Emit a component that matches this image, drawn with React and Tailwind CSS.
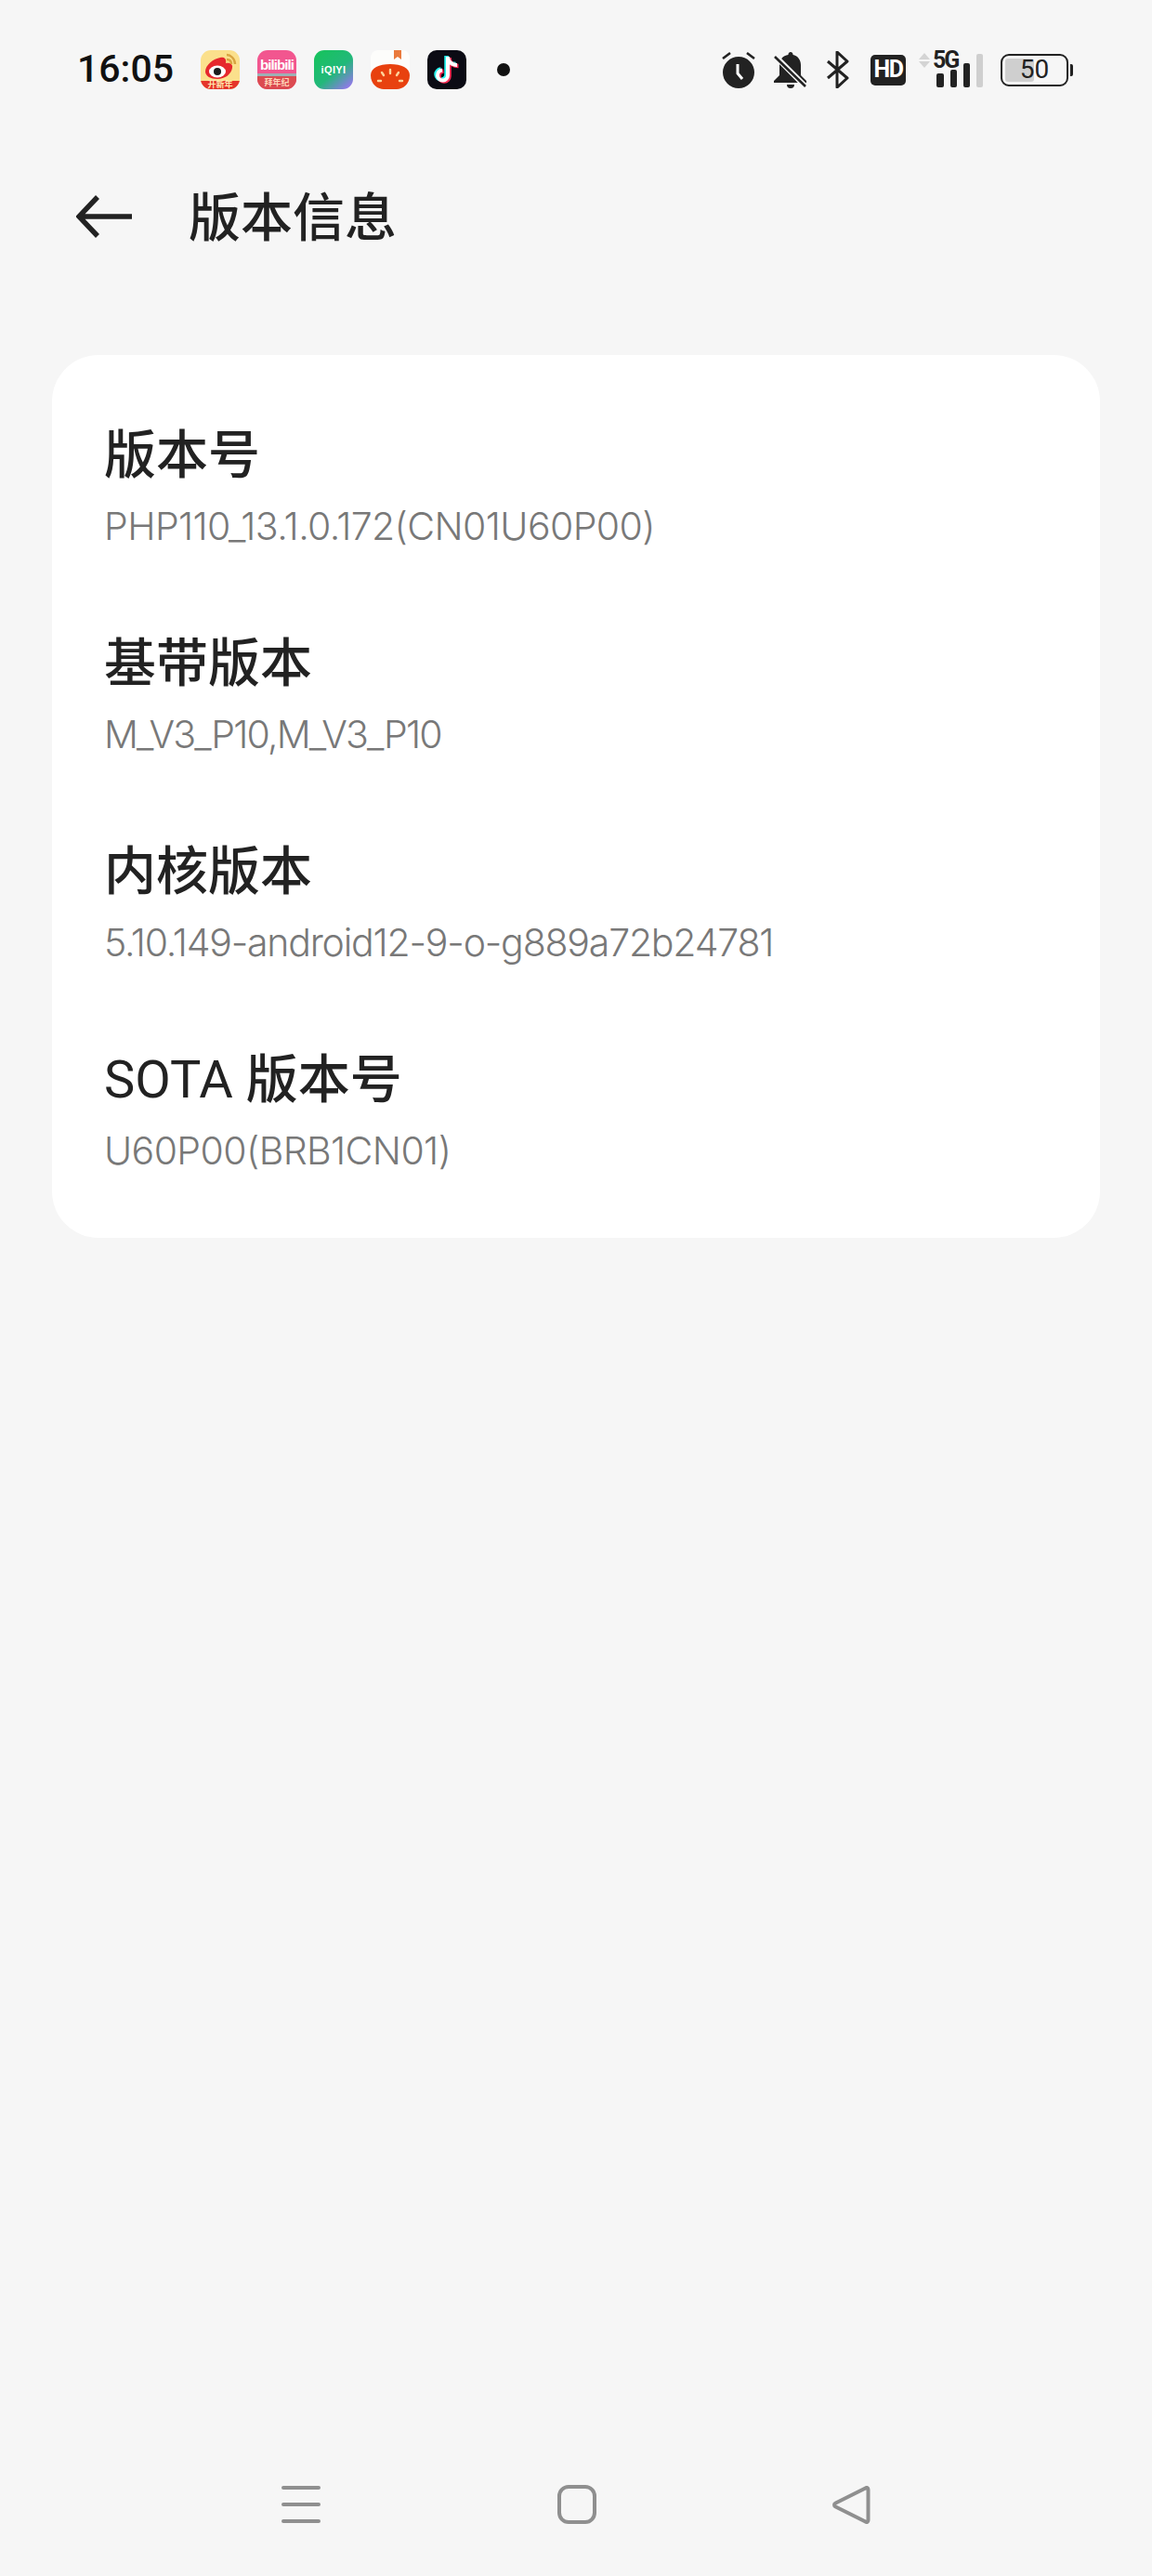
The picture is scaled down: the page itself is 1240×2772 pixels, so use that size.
import React from 'react';

const cjk = "font-['Roboto','Noto_Sans_CJK_SC',sans-serif]";

const items = [
  { title: '版本号', value: 'PHP110_13.1.0.172(CN01U60P00)', track: 'tracking-[-0.6px]' },
  { title: '基带版本', value: 'M_V3_P10,M_V3_P10', track: 'tracking-[-1.8px]' },
  { title: '内核版本', value: '5.10.149-android12-9-o-g889a72b24781', track: 'tracking-[-1.2px]' },
  { latin: 'SOTA', title: ' 版本号', value: 'U60P00(BRB1CN01)', track: 'tracking-[-0.6px]' },
];

const Weibo = () => (
  <div className="relative w-[42px] h-[42px] rounded-[11px] overflow-hidden bg-[#fbe08c]">
    <svg viewBox="0 0 42 42" className="w-full h-full">
      <path d="M5 23c0-7 9-14 16-15 5-1 7 2 6 6 4-1 8 1 7 5-1 7-8 12-16 12-7 0-13-3-13-8z" fill="#e6282d" />
      <ellipse cx="18" cy="23" rx="9" ry="6.500" fill="#fff" />
      <circle cx="18" cy="23" r="4" fill="#1c1c1c" />
      <path d="M28 5c4 0 9 4 9 10M28 10c3 0 5 2 5 5" stroke="#d9a441" strokeWidth="2.400" fill="none" />
      <path d="M0 33h42v9H0z" fill="#e5352b" />
    </svg>
    <span className="absolute bottom-0 inset-x-0 text-center text-[9px] leading-[10px] font-bold text-[#ffe9b0] font-['Noto_Sans_CJK_SC',sans-serif]">开新年</span>
  </div>
);

const Bili = () => (
  <div className="relative w-[42px] h-[42px] rounded-[11px] overflow-hidden bg-[#f2568f]">
    <div className="absolute left-0 right-0 top-[7px] text-center text-white font-bold text-[15px] leading-[18px] tracking-[-0.9px] font-['Liberation_Sans',sans-serif]">bilibili</div>
    <div className="absolute left-0 right-0 bottom-0 h-[17px] bg-[#dc4b51] border-t-[3px] border-[#9db0b5]" />
    <span className="absolute bottom-0 inset-x-0 text-center text-[9px] leading-[14px] font-bold text-[#ffd9bb] font-['Noto_Sans_CJK_SC',sans-serif]">拜年纪</span>
  </div>
);

const Iqiyi = () => (
  <div className="w-[42px] h-[42px] rounded-[11px] flex items-center justify-center bg-[linear-gradient(140deg,#16c45a_0%,#22b87a_55%,#a86bff_100%)]">
    <span className="text-white font-bold text-[11px] tracking-[0.4px] font-['Liberation_Sans',sans-serif]">iQIYI</span>
  </div>
);

const Tomato = () => (
  <svg viewBox="0 0 42 42" className="w-[42px] h-[42px]">
    <path d="M8 0h26a8 8 0 0 1 8 8v16H0V8a8 8 0 0 1 8-8z" fill="#fdfdfb" />
    <path d="M25 0h8v10l-4-3-4 3z" fill="#ea7a3c" />
    <path d="M0 27c0-8 9-12 21-12s21 4 21 12c0 10-8 15-14 15H14C8 42 0 37 0 27z" fill="#e8410f" />
    <g stroke="#ffd39a" strokeWidth="2.400" strokeLinecap="round">
      <path d="M21 21v4M12 24l2 3M30 24l-2 3M8 33h3M31 33h3" />
    </g>
  </svg>
);

const TIKTOK_NOTE = 'M22 7v20a5.500 5.500 0 1 1-6-5.500M22 7c0 5 4 9 10 9';

const Tiktok = () => (
  <svg viewBox="0 0 42 42" className="w-[42px] h-[42px]">
    <rect width="42" height="42" rx="10" fill="#0b0b14" />
    <path d={TIKTOK_NOTE} fill="none" stroke="#25f4ee" strokeWidth="4.500" transform="translate(-1.500 -1)" />
    <path d={TIKTOK_NOTE} fill="none" stroke="#fe2c55" strokeWidth="4.500" transform="translate(1.500 1)" />
    <path d={TIKTOK_NOTE} fill="none" stroke="#fff" strokeWidth="4" />
  </svg>
);

const Alarm = () => (
  <svg viewBox="0 0 36 40" className="w-[36px] h-[40px]">
    <circle cx="18" cy="23" r="17" fill="#222" />
    <path d="M1 8l8-6M35 8l-8-6" stroke="#222" strokeWidth="2.600" />
    <path d="M17 14v10l5 6" stroke="#fff" strokeWidth="3" fill="none" />
  </svg>
);

const BellOff = () => (
  <svg viewBox="0 0 38 40" className="w-[38px] h-[40px]">
    <path d="M19 1a2.500 2.500 0 0 1 2.500 3c5 1 8.500 5 8.500 11v11l6 6v2H1v-2l6-6V15c0-6 3.500-10 9.500-11A2.500 2.500 0 0 1 19 1z" fill="#222" />
    <path d="M15 36h8a4 4 0 0 1-8 0z" fill="#222" />
    <path d="M3 6l32 32" stroke="#f6f6f6" strokeWidth="6" />
    <path d="M2 6l33 32" stroke="#222" strokeWidth="2.600" />
  </svg>
);

const Bluetooth = () => (
  <svg viewBox="0 0 26 40" className="w-[26px] h-[40px]">
    <path d="M2 11l21 18-11 10V1l11 10L2 29" fill="none" stroke="#222" strokeWidth="3" strokeLinejoin="round" />
  </svg>
);

const Signal = () => (
  <div className="relative w-[70px] h-[38px] ml-[13px]">
    <svg viewBox="0 0 70 38" className="absolute inset-0 w-full h-full">
      <path d="M1 8l6-7 6 7zM1 10h12l-6 7z" fill="#d4d4d4" />
      <rect x="20" y="23" width="8" height="15" rx="2" fill="#222" />
      <rect x="35" y="19" width="7" height="19" rx="2" fill="#222" />
      <rect x="49" y="12" width="7" height="26" rx="2" fill="#222" />
      <rect x="63" y="2" width="7" height="36" rx="2" fill="#cfcfcf" />
    </svg>
    <span className="absolute left-[16px] top-[-3px] text-[25px] leading-[24px] font-bold text-[#222] tracking-[-2px] font-['Roboto',sans-serif]">5G</span>
  </div>
);

const Battery = () => (
  <div className="flex items-center ml-[19px]">
    <div className="relative w-[73px] h-[35px] rounded-[9px] border-[2.5px] border-[#222] flex items-center justify-center overflow-hidden">
      <div className="absolute left-[3px] top-[3px] bottom-[3px] w-[31px] rounded-[3px] bg-[#cfcfcf]" />
      <span className="relative text-[28px] leading-none text-[#222] font-['Roboto',sans-serif]">50</span>
    </div>
    <div className="w-[3px] h-[13px] ml-[2px] bg-[#222] rounded-r-[2px]" />
  </div>
);

const App = () => {
  return (
    <div className={`w-[1240px] h-[2772px] bg-[#f6f6f6] flex flex-col text-[#222] ${cjk}`}>
      {/* status bar */}
      <div className="h-[150px] flex items-center justify-between pl-[83px] pr-[85px]">
        <div className="flex items-center">
          <span className="w-[133px] text-[41px] font-medium text-[#111] font-['Roboto',sans-serif]">16:05</span>
          <div className="flex items-center gap-[19px]">
            <Weibo />
            <Bili />
            <Iqiyi />
            <Tomato />
            <Tiktok />
          </div>
          <div className="w-[14px] h-[14px] ml-[33px] rounded-full bg-[#111]" />
        </div>
        <div className="flex items-center">
          <Alarm />
          <div className="ml-[19px]"><BellOff /></div>
          <div className="ml-[19px]"><Bluetooth /></div>
          <div className="ml-[22px] w-[38px] h-[33px] rounded-[5px] bg-[#222] flex items-center justify-center text-white font-bold text-[25px] tracking-[-1.5px] font-['Roboto',sans-serif]">HD</div>
          <Signal />
          <Battery />
        </div>
      </div>

      {/* header */}
      <div className="h-[166px] flex items-center pl-[82px]">
        <svg viewBox="0 0 60 46" className="w-[60px] h-[46px]">
          <path d="M60 23H3M23 2L3 23l20 21" fill="none" stroke="#222" strokeWidth="5.500" strokeLinejoin="miter" />
        </svg>
        <h1 className="ml-[61px] pt-[4px] text-[56px] font-medium leading-none">版本信息</h1>
      </div>

      {/* card */}
      <div className="mt-[66px] mx-[56px] h-[950px] bg-white rounded-[50px] pt-[50px] pl-[56px]">
        {items.map((item) => (
          <div key={item.value} className="h-[224px] pt-[25px]">
            <div className="text-[56px] leading-[66px] font-medium">
              {item.latin && <span className="font-[450]">{item.latin}</span>}
              {item.title}
            </div>
            <div className={`text-[41px] leading-[50px] mt-[18px] font-light text-[#787878] font-['Inter',sans-serif] ${item.track}`}>{item.value}</div>
          </div>
        ))}
      </div>

      {/* nav bar */}
      <div className="mt-auto mb-[56px] h-[42px] flex items-center pl-[303px]">
        <div className="w-[42px] h-[42px] flex flex-col justify-between py-[1px]">
          <div className="h-[4px] bg-[#8f8f8f] rounded-sm" />
          <div className="h-[4px] bg-[#8f8f8f] rounded-sm" />
          <div className="h-[4px] bg-[#8f8f8f] rounded-sm" />
        </div>
        <div className="ml-[255px] w-[42px] h-[42px] rounded-[12px] border-4 border-[#8f8f8f]" />
        <svg viewBox="0 0 41 41" className="ml-[254px] w-[41px] h-[41px]">
          <path d="M38.500 4c0-2-1.500-2.500-3-1.500L3.500 18.500c-2 1-2 3 0 4L35.500 38.500c1.500 1 3 .5 3-1.500z" fill="none" stroke="#8f8f8f" strokeWidth="4" />
        </svg>
      </div>
    </div>
  );
};

export default App;
